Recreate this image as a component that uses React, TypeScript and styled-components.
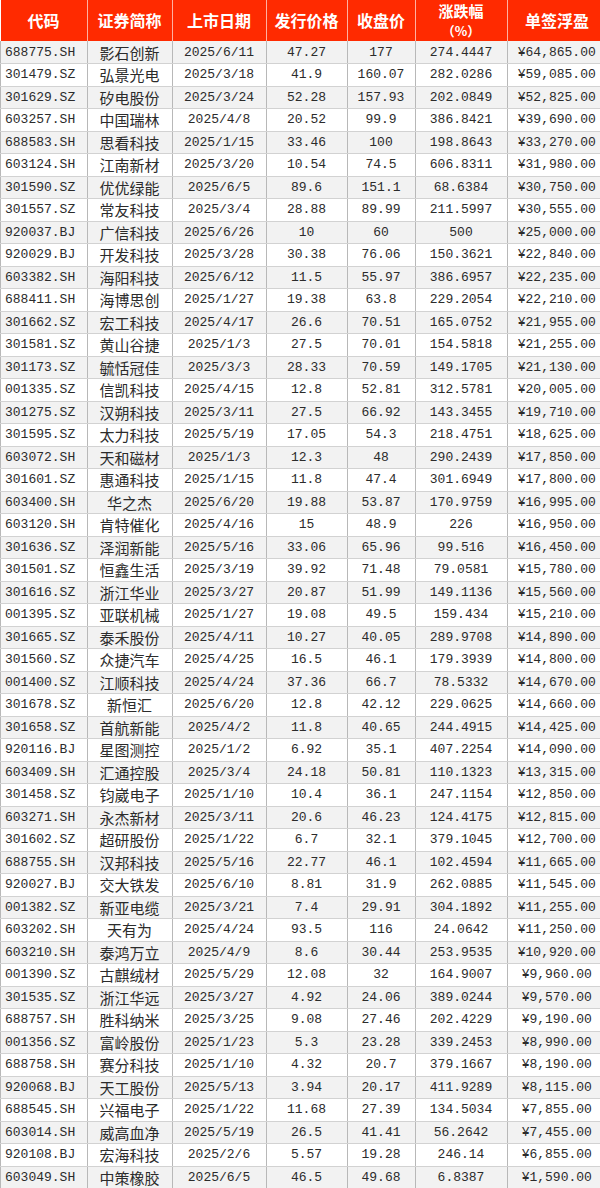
import React from 'react';
import styled, { createGlobalStyle } from 'styled-components';

const GlobalStyle = createGlobalStyle`
  html, body {
    margin: 0;
    padding: 0;
    background: #fff;
  }
`;

const Table = styled.table`
  width: 600px;
  border-collapse: collapse;
  table-layout: fixed;
  font-family: "Liberation Mono", "Noto Sans CJK SC", monospace;
  font-size: 13px;
  color: #2b2b2b;
`;

const HeadCell = styled.th<{ $w: number }>`
  width: ${(p) => p.$w}px;
  height: 41px;
  padding: 0;
  background: #ff2a00;
  color: #fff;
  font-family: "Noto Sans CJK SC", sans-serif;
  font-weight: bold;
  font-size: 16px;
  line-height: 19px;
  text-align: center;
  border-right: 1px solid #ffb0a0;
  &:last-child {
    border-right: none;
  }
`;

const HeadLine = styled.div<{ $small?: boolean }>`
  line-height: 20px;
  font-size: ${(p) => (p.$small ? '13px' : '15px')};
`;

const Row = styled.tr<{ $odd: boolean }>`
  height: 22.5px;
  background: ${(p) => (p.$odd ? '#f2f2f2' : '#ffffff')};
`;

const Cell = styled.td<{ $left?: boolean; $cn?: boolean }>`
  padding: 0;
  padding-left: ${(p) => (p.$left ? '4px' : '0')};
  text-align: ${(p) => (p.$left ? 'left' : 'center')};
  font-family: ${(p) =>
    p.$cn ? '"Noto Sans CJK SC", sans-serif' : '"Liberation Mono", "Noto Sans CJK SC", monospace'};
  font-size: ${(p) => (p.$cn ? '15px' : '13px')};
  line-height: 21px;
  white-space: nowrap;
  overflow: hidden;
  border-right: 1px solid #b8b8b8;
  border-bottom: 1px solid #d2d2d2;
  &:first-child {
    border-left: 1px solid #b8b8b8;
  }
`;

const widths = [86, 84, 93, 80, 67, 91, 99];

type Ipo = [string, string, string, string, string, string, string];

const rows: Ipo[] = [
  ['688775.SH', '影石创新', '2025/6/11', '47.27', '177', '274.4447', '¥64,865.00'],
  ['301479.SZ', '弘景光电', '2025/3/18', '41.9', '160.07', '282.0286', '¥59,085.00'],
  ['301629.SZ', '矽电股份', '2025/3/24', '52.28', '157.93', '202.0849', '¥52,825.00'],
  ['603257.SH', '中国瑞林', '2025/4/8', '20.52', '99.9', '386.8421', '¥39,690.00'],
  ['688583.SH', '思看科技', '2025/1/15', '33.46', '100', '198.8643', '¥33,270.00'],
  ['603124.SH', '江南新材', '2025/3/20', '10.54', '74.5', '606.8311', '¥31,980.00'],
  ['301590.SZ', '优优绿能', '2025/6/5', '89.6', '151.1', '68.6384', '¥30,750.00'],
  ['301557.SZ', '常友科技', '2025/3/4', '28.88', '89.99', '211.5997', '¥30,555.00'],
  ['920037.BJ', '广信科技', '2025/6/26', '10', '60', '500', '¥25,000.00'],
  ['920029.BJ', '开发科技', '2025/3/28', '30.38', '76.06', '150.3621', '¥22,840.00'],
  ['603382.SH', '海阳科技', '2025/6/12', '11.5', '55.97', '386.6957', '¥22,235.00'],
  ['688411.SH', '海博思创', '2025/1/27', '19.38', '63.8', '229.2054', '¥22,210.00'],
  ['301662.SZ', '宏工科技', '2025/4/17', '26.6', '70.51', '165.0752', '¥21,955.00'],
  ['301581.SZ', '黄山谷捷', '2025/1/3', '27.5', '70.01', '154.5818', '¥21,255.00'],
  ['301173.SZ', '毓恬冠佳', '2025/3/3', '28.33', '70.59', '149.1705', '¥21,130.00'],
  ['001335.SZ', '信凯科技', '2025/4/15', '12.8', '52.81', '312.5781', '¥20,005.00'],
  ['301275.SZ', '汉朔科技', '2025/3/11', '27.5', '66.92', '143.3455', '¥19,710.00'],
  ['301595.SZ', '太力科技', '2025/5/19', '17.05', '54.3', '218.4751', '¥18,625.00'],
  ['603072.SH', '天和磁材', '2025/1/3', '12.3', '48', '290.2439', '¥17,850.00'],
  ['301601.SZ', '惠通科技', '2025/1/15', '11.8', '47.4', '301.6949', '¥17,800.00'],
  ['603400.SH', '华之杰', '2025/6/20', '19.88', '53.87', '170.9759', '¥16,995.00'],
  ['603120.SH', '肯特催化', '2025/4/16', '15', '48.9', '226', '¥16,950.00'],
  ['301636.SZ', '泽润新能', '2025/5/16', '33.06', '65.96', '99.516', '¥16,450.00'],
  ['301501.SZ', '恒鑫生活', '2025/3/19', '39.92', '71.48', '79.0581', '¥15,780.00'],
  ['301616.SZ', '浙江华业', '2025/3/27', '20.87', '51.99', '149.1136', '¥15,560.00'],
  ['001395.SZ', '亚联机械', '2025/1/27', '19.08', '49.5', '159.434', '¥15,210.00'],
  ['301665.SZ', '泰禾股份', '2025/4/11', '10.27', '40.05', '289.9708', '¥14,890.00'],
  ['301560.SZ', '众捷汽车', '2025/4/25', '16.5', '46.1', '179.3939', '¥14,800.00'],
  ['001400.SZ', '江顺科技', '2025/4/24', '37.36', '66.7', '78.5332', '¥14,670.00'],
  ['301678.SZ', '新恒汇', '2025/6/20', '12.8', '42.12', '229.0625', '¥14,660.00'],
  ['301658.SZ', '首航新能', '2025/4/2', '11.8', '40.65', '244.4915', '¥14,425.00'],
  ['920116.BJ', '星图测控', '2025/1/2', '6.92', '35.1', '407.2254', '¥14,090.00'],
  ['603409.SH', '汇通控股', '2025/3/4', '24.18', '50.81', '110.1323', '¥13,315.00'],
  ['301458.SZ', '钧崴电子', '2025/1/10', '10.4', '36.1', '247.1154', '¥12,850.00'],
  ['603271.SH', '永杰新材', '2025/3/11', '20.6', '46.23', '124.4175', '¥12,815.00'],
  ['301602.SZ', '超研股份', '2025/1/22', '6.7', '32.1', '379.1045', '¥12,700.00'],
  ['688755.SH', '汉邦科技', '2025/5/16', '22.77', '46.1', '102.4594', '¥11,665.00'],
  ['920027.BJ', '交大铁发', '2025/6/10', '8.81', '31.9', '262.0885', '¥11,545.00'],
  ['001382.SZ', '新亚电缆', '2025/3/21', '7.4', '29.91', '304.1892', '¥11,255.00'],
  ['603202.SH', '天有为', '2025/4/24', '93.5', '116', '24.0642', '¥11,250.00'],
  ['603210.SH', '泰鸿万立', '2025/4/9', '8.6', '30.44', '253.9535', '¥10,920.00'],
  ['001390.SZ', '古麒绒材', '2025/5/29', '12.08', '32', '164.9007', '¥9,960.00'],
  ['301535.SZ', '浙江华远', '2025/3/27', '4.92', '24.06', '389.0244', '¥9,570.00'],
  ['688757.SH', '胜科纳米', '2025/3/25', '9.08', '27.46', '202.4229', '¥9,190.00'],
  ['001356.SZ', '富岭股份', '2025/1/23', '5.3', '23.28', '339.2453', '¥8,990.00'],
  ['688758.SH', '赛分科技', '2025/1/10', '4.32', '20.7', '379.1667', '¥8,190.00'],
  ['920068.BJ', '天工股份', '2025/5/13', '3.94', '20.17', '411.9289', '¥8,115.00'],
  ['688545.SH', '兴福电子', '2025/1/22', '11.68', '27.39', '134.5034', '¥7,855.00'],
  ['603014.SH', '威高血净', '2025/5/19', '26.5', '41.41', '56.2642', '¥7,455.00'],
  ['920108.BJ', '宏海科技', '2025/2/6', '5.57', '19.28', '246.14', '¥6,855.00'],
  ['603049.SH', '中策橡胶', '2025/6/5', '46.5', '49.68', '6.8387', '¥1,590.00'],
];

const headers: React.ReactNode[] = [
  '代码',
  '证券简称',
  '上市日期',
  '发行价格',
  '收盘价',
  <>
    <HeadLine>涨跌幅</HeadLine>
    <HeadLine $small>（%）</HeadLine>
  </>,
  '单签浮盈',
];

const App: React.FC = () => {
  return (
    <>
      <GlobalStyle />
      <Table>
        <thead>
          <tr>
            {headers.map((h, i) => (
              <HeadCell key={i} $w={widths[i]}>{h}</HeadCell>
            ))}
          </tr>
        </thead>
        <tbody>
          {rows.map((r, i) => (
            <Row key={r[0]} $odd={i % 2 === 0}>
              <Cell $left>{r[0]}</Cell>
              <Cell $cn>{r[1]}</Cell>
              <Cell>{r[2]}</Cell>
              <Cell>{r[3]}</Cell>
              <Cell>{r[4]}</Cell>
              <Cell>{r[5]}</Cell>
              <Cell>{r[6]}</Cell>
            </Row>
          ))}
        </tbody>
      </Table>
    </>
  );
};

export default App;
